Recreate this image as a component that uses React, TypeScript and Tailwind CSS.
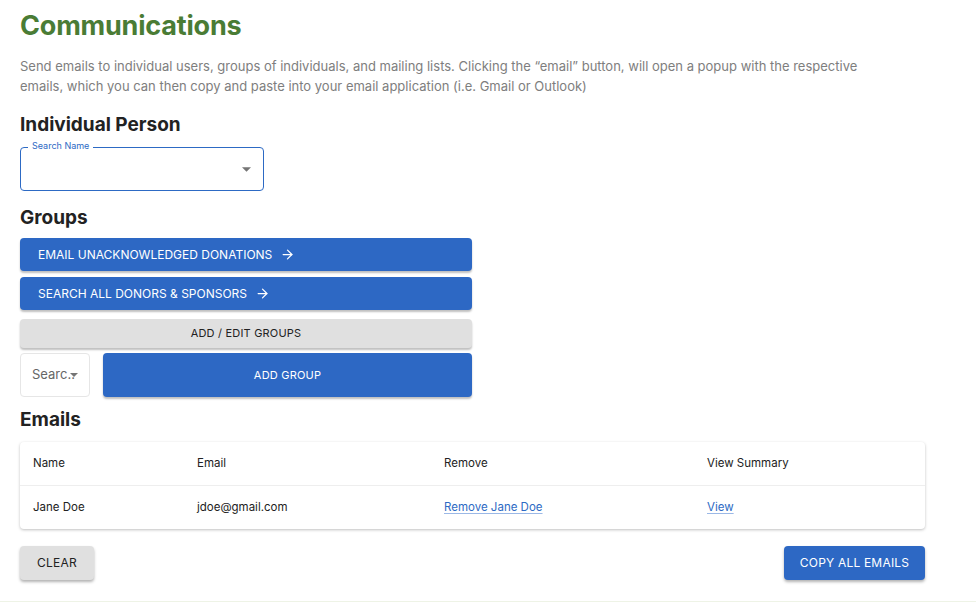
import { ArrowRight } from 'lucide-react'

const font = { fontFamily: 'Inter, "Noto Sans", sans-serif' }

function Caret({ className }: { className?: string }) {
    return (
        <svg viewBox="0 0 10 5" className={className}>
            <path d="M0 0 L10 0 L5 5 Z" fill="#757575" />
        </svg>
    )
}

export default function App() {
    return (
        <div
            style={font}
            className="w-[976px] h-[602px] bg-white relative overflow-hidden"
        >
            <div className="px-5 pt-[8px]">
                <h1 className="text-[27px] leading-[36px] font-bold text-[#4a7c35] tracking-[-0.2px]">
                    Communications
                </h1>
                <p className="mt-[12px] max-w-[850px] text-[13px] leading-[20px] text-[#7e7e7e]">
                    Send emails to individual users, groups of individuals, and
                    mailing lists. Clicking the “email” button, will open a
                    popup with the respective emails, which you can then copy
                    and paste into your email application (i.e. Gmail or
                    Outlook)
                </p>

                <h2 className="mt-[17px] text-[19px] leading-[24px] font-bold text-[#222]">
                    Individual Person
                </h2>
                <div className="relative mt-[10px] w-[244px] h-[44px] rounded-[4px] border-[1.5px] border-[#2d6ac4] flex items-center justify-end pr-[12px]">
                    <span className="absolute -top-[8px] left-[7px] bg-white px-[4px] text-[9px] leading-[12px] text-[#2d6ac4]">
                        Search Name
                    </span>
                    <Caret className="w-[9px] h-[5px]" />
                </div>

                <h2 className="mt-[15px] text-[19px] leading-[24px] font-bold text-[#222]">
                    Groups
                </h2>
                <div className="mt-[8px] w-[452px] flex flex-col">
                    <button className="h-[33px] rounded-[4px] bg-[#2d68c4] text-white text-[12px] tracking-[0px] uppercase flex items-center gap-[8px] pl-[18px] shadow-[0_2px_2px_rgba(0,0,0,0.25)]">
                        Email Unacknowledged Donations
                        <ArrowRight size={15} strokeWidth={2} />
                    </button>
                    <button className="mt-[6px] h-[33px] rounded-[4px] bg-[#2d68c4] text-white text-[12px] tracking-[0px] uppercase flex items-center gap-[8px] pl-[18px] shadow-[0_2px_2px_rgba(0,0,0,0.25)]">
                        Search All Donors &amp; Sponsors
                        <ArrowRight size={15} strokeWidth={2} />
                    </button>
                    <button className="mt-[9px] h-[29px] rounded-[4px] bg-[#e0e0e0] text-[#222] text-[11px] tracking-[0.2px] uppercase flex items-center justify-center shadow-[0_2px_2px_rgba(0,0,0,0.25)]">
                        Add / Edit Groups
                    </button>
                    <div className="mt-[5px] flex gap-[13px]">
                        <div className="w-[70px] h-[44px] rounded-[4px] border border-[#e6e6e6] bg-white flex items-center pl-[11px]">
                            <span className="text-[13px] text-[#666]">
                                Searc..
                            </span>
                            <Caret className="w-[8px] h-[4px] -ml-[5px]" />
                        </div>
                        <button className="flex-1 h-[44px] rounded-[4px] bg-[#2d68c4] text-white text-[11px] tracking-[0.2px] uppercase flex items-center justify-center shadow-[0_2px_2px_rgba(0,0,0,0.25)]">
                            Add Group
                        </button>
                    </div>
                </div>

                <h2 className="mt-[11px] text-[19px] leading-[24px] font-bold text-[#222]">
                    Emails
                </h2>
                <div className="mt-[10px] w-[905px] rounded-[4px] bg-white shadow-[0_1px_3px_rgba(0,0,0,0.25)] text-[11.5px] text-[#222]">
                    <div className="grid grid-cols-[164px_247px_263px_1fr] h-[44px] items-center border-b border-[#eeeeee] px-[13px]">
                        <span>Name</span>
                        <span>Email</span>
                        <span>Remove</span>
                        <span>View Summary</span>
                    </div>
                    <div className="grid grid-cols-[164px_247px_263px_1fr] h-[43px] items-center px-[13px]">
                        <span>Jane Doe</span>
                        <span>jdoe@gmail.com</span>
                        <a className="text-[#2d6ac4] underline underline-offset-2 decoration-[#9bb8e6]">
                            Remove Jane Doe
                        </a>
                        <a className="text-[#2d6ac4] underline underline-offset-2 decoration-[#9bb8e6]">
                            View
                        </a>
                    </div>
                </div>

                <div className="mt-[17px] w-[905px] flex justify-between">
                    <button className="w-[74px] h-[34px] rounded-[4px] bg-[#e0e0e0] text-[#222] text-[12px] tracking-[0.2px] uppercase shadow-[0_2px_3px_rgba(0,0,0,0.3)]">
                        Clear
                    </button>
                    <button className="w-[141px] h-[34px] rounded-[4px] bg-[#2d68c4] text-white text-[12px] tracking-[0.2px] uppercase shadow-[0_2px_3px_rgba(0,0,0,0.3)]">
                        Copy All Emails
                    </button>
                </div>
            </div>
            <div className="absolute bottom-0 left-0 right-0 h-[1px] bg-[#eef3e6]" />
        </div>
    )
}
